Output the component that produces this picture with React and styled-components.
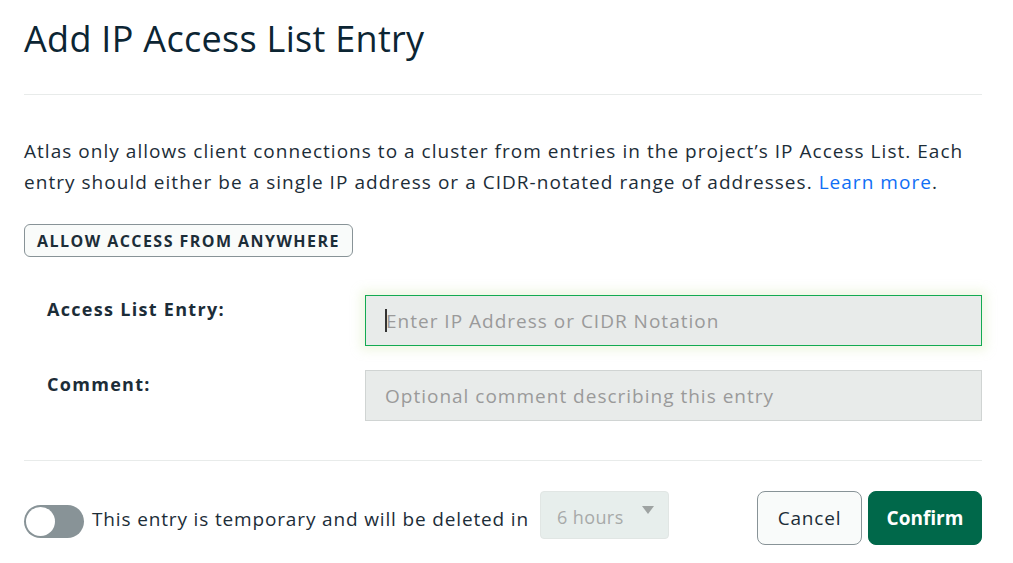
import React from 'react';
import styled, { createGlobalStyle } from 'styled-components';

const GlobalStyle = createGlobalStyle`
    html, body {
        margin: 0;
        padding: 0;
        background: #ffffff;
    }
    body {
        font-family: "Open Sans", "Noto Sans", sans-serif;
        color: #1c2d38;
    }
`

const Modal = styled.div`
    width: 958px;
    padding: 0 31px 0 24px;
    display: flex;
    flex-direction: column;
`

const Title = styled.h1`
    margin: 0;
    padding-top: 17px;
    height: 95px;
    box-sizing: border-box;
    font-size: 36px;
    line-height: 44px;
    font-weight: 400;
    letter-spacing: 0.3px;
    color: #0c2533;
    border-bottom: 1px solid #e8ebea;
`

const Intro = styled.p`
    margin: 41px 0 0;
    font-size: 19px;
    line-height: 31px;
    letter-spacing: 1.03px;
    color: #1c2d38;
    white-space: nowrap;

    a {
        color: #0f6ef5;
        text-decoration: none;
    }
`

const AnywhereButton = styled.button`
    align-self: flex-start;
    margin-top: 26px;
    height: 33px;
    padding: 0 12px;
    border: 1px solid #889397;
    border-radius: 6px;
    background: #f9fbfa;
    font-family: inherit;
    font-size: 16px;
    font-weight: 700;
    letter-spacing: 1.45px;
    color: #1c2d38;
    text-transform: uppercase;
`

const Fields = styled.div`
    display: grid;
    grid-template-columns: 341px 1fr;
    row-gap: 24px;
    margin-top: 38px;
    padding-bottom: 39px;
    border-bottom: 1px solid #e8ebea;
`

const Label = styled.label`
    padding: 2px 0 0 23px;
    font-size: 18px;
    font-weight: 700;
    letter-spacing: 1.3px;
    color: #1c2d38;
`

const Input = styled.div`
    height: 51px;
    box-sizing: border-box;
    display: flex;
    align-items: center;
    padding-left: 19px;
    background: #e8ebea;
    border: 1px solid ${p => (p.$focused ? '#13aa52' : '#d0d4d3')};
    box-shadow: ${p => (p.$focused ? '0 0 10px 4px rgba(210, 230, 170, 0.35)' : 'none')};
    font-size: 19px;
    letter-spacing: 1px;
    color: #9a9a9a;
`

const Caret = styled.span`
    display: inline-block;
    width: 2px;
    height: 23px;
    background: #333;
    margin-right: -1px;
`

const Footer = styled.div`
    display: flex;
    align-items: center;
    margin-top: 30px;
    height: 56px;
`

const Toggle = styled.div`
    width: 60px;
    height: 33px;
    box-sizing: border-box;
    border-radius: 17px;
    background: #889397;
    padding: 2px;
    display: flex;
    align-items: center;
    margin-top: 4px;
`

const Knob = styled.div`
    width: 29px;
    height: 29px;
    border-radius: 50%;
    background: #ffffff;
`

const TempText = styled.span`
    margin-left: 8px;
    font-size: 19px;
    letter-spacing: 0.85px;
    color: #1c2d38;
`

const Select = styled.div`
    margin-left: 11px;
    width: 129px;
    height: 48px;
    box-sizing: border-box;
    border: 1px solid #e1e6e4;
    border-radius: 4px;
    background: #e7eeec;
    display: flex;
    align-items: center;
    justify-content: space-between;
    padding: 4px 14px 0 16px;
    font-size: 18px;
    letter-spacing: 0.4px;
    color: #a7aaa9;
    align-self: flex-start;

    &::after {
        content: '';
        border-left: 6px solid transparent;
        border-right: 6px solid transparent;
        border-top: 8px solid #9ea3a2;
        margin-top: -14px;
    }
`

const Actions = styled.div`
    margin-left: auto;
    display: flex;
    gap: 6px;
    align-self: flex-start;
`

const Button = styled.button`
    height: 54px;
    width: ${p => (p.$primary ? '114px' : '105px')};
    border-radius: 8px;
    border: 1px solid ${p => (p.$primary ? '#00684a' : '#889397')};
    background: ${p => (p.$primary ? '#00684a' : '#f9fbfa')};
    color: ${p => (p.$primary ? '#ffffff' : '#1c2d38')};
    font-family: inherit;
    font-size: 19px;
    letter-spacing: ${p => (p.$primary ? '0' : '0.8px')};
    font-weight: ${p => (p.$primary ? 700 : 400)};
`

export default function App() {
    return (
        <>
            <GlobalStyle />
            <Modal>
                <Title>Add IP Access List Entry</Title>
                <Intro>
                    Atlas only allows client connections to a cluster from entries in the project’s IP Access List. Each<br />
                    entry should either be a single IP address or a CIDR-notated range of addresses. <a href="#">Learn more</a>.
                </Intro>
                <AnywhereButton>Allow Access From Anywhere</AnywhereButton>
                <Fields>
                    <Label>Access List Entry:</Label>
                    <Input $focused>
                        <Caret />
                        Enter IP Address or CIDR Notation
                    </Input>
                    <Label>Comment:</Label>
                    <Input>Optional comment describing this entry</Input>
                </Fields>
                <Footer>
                    <Toggle>
                        <Knob />
                    </Toggle>
                    <TempText>This entry is temporary and will be deleted in</TempText>
                    <Select>6 hours</Select>
                    <Actions>
                        <Button>Cancel</Button>
                        <Button $primary>Confirm</Button>
                    </Actions>
                </Footer>
            </Modal>
        </>
    )
}
